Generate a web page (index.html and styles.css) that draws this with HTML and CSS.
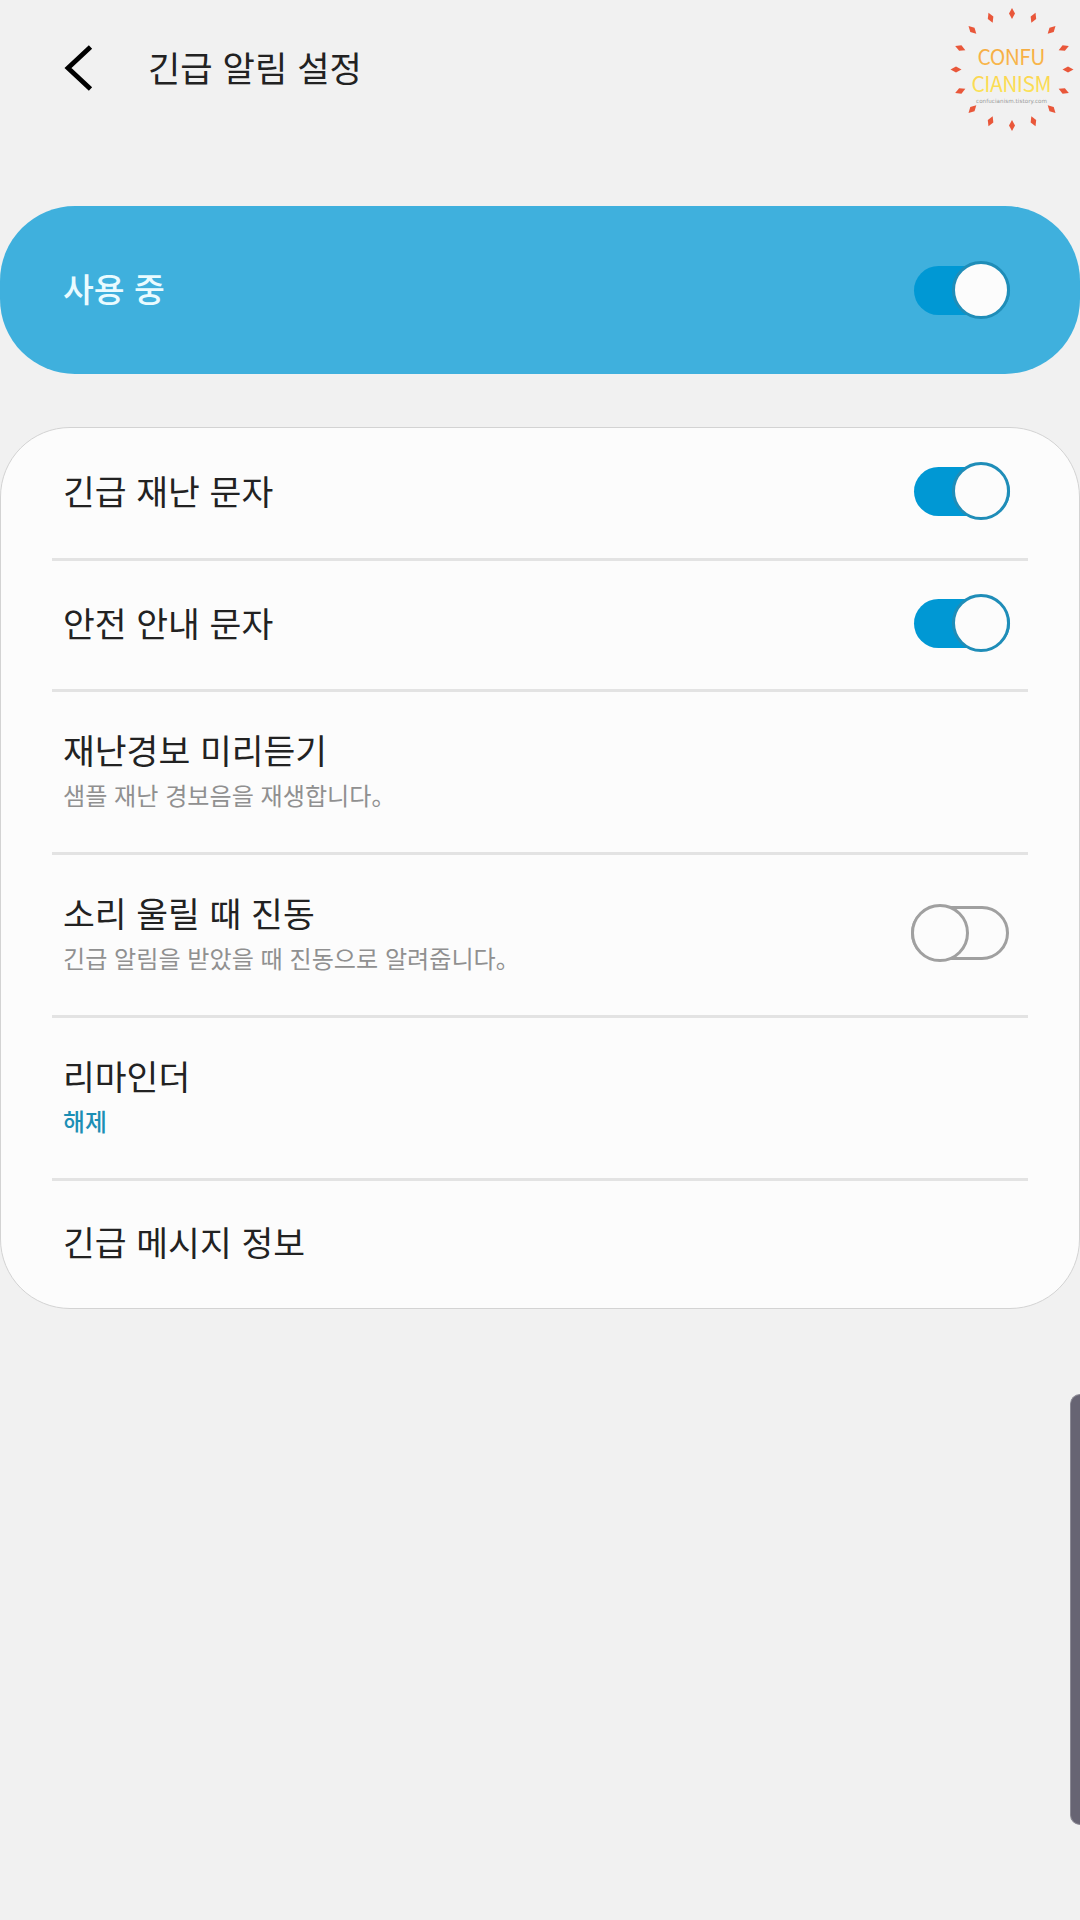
FILE: index.html
```html
<!DOCTYPE html>
<html lang="ko">
  <head>
    <meta charset="UTF-8" />
    <title>긴급 알림 설정</title>
    <link rel="stylesheet" href="styles.css">
  </head>
  <body>
    <header class="title-bar">
      <svg class="back" width="30" height="50" viewBox="0 0 30 50">
        <path d="M27.5 4 L5 25 L27.5 46" />
      </svg>
      <h1 class="title-text">긴급 알림 설정</h1>
      <svg class="logo" width="140" height="140" viewBox="0 0 140 140">
        <defs>
          <path id="ray" d="M0 -61.5 L3 -56 L0 -50.5 L-3 -56 Z" />
          <linearGradient id="gold" x1="0" y1="0" x2="0" y2="1">
            <stop offset="0" stop-color="#f5a83c" />
            <stop offset="1" stop-color="#f9b950" />
          </linearGradient>
          <linearGradient id="yellow" x1="0" y1="0" x2="0" y2="1">
            <stop offset="0" stop-color="#fbd04c" />
            <stop offset="1" stop-color="#fbe65a" />
          </linearGradient>
        </defs>
        <g class="rays" transform="translate(72 69.5)">
          <use href="#ray" />
          <use href="#ray" transform="rotate(22.5)" />
          <use href="#ray" transform="rotate(45)" />
          <use href="#ray" transform="rotate(67.5)" />
          <use href="#ray" transform="rotate(90)" />
          <use href="#ray" transform="rotate(112.5)" />
          <use href="#ray" transform="rotate(135)" />
          <use href="#ray" transform="rotate(157.5)" />
          <use href="#ray" transform="rotate(180)" />
          <use href="#ray" transform="rotate(202.5)" />
          <use href="#ray" transform="rotate(225)" />
          <use href="#ray" transform="rotate(247.5)" />
          <use href="#ray" transform="rotate(270)" />
          <use href="#ray" transform="rotate(292.5)" />
          <use href="#ray" transform="rotate(315)" />
          <use href="#ray" transform="rotate(337.5)" />
        </g>
        <text class="logo-name" x="37.5" y="64.5" textLength="68" fill="url(#gold)">CONFU</text>
        <text class="logo-name" x="31.5" y="92" textLength="80" fill="url(#yellow)">CIANISM</text>
        <text class="logo-url" x="36" y="102.5" textLength="71">confucianism.tistory.com</text>
      </svg>
    </header>

    <section class="master">
      <span class="label">사용 중</span>
      <span class="switch on"></span>
    </section>

    <main class="list">
      <div class="row">
        <span class="label">긴급 재난 문자</span>
        <span class="switch on"></span>
      </div>
      <div class="row">
        <span class="label">안전 안내 문자</span>
        <span class="switch on"></span>
      </div>
      <div class="row tall">
        <div class="texts">
          <span class="label">재난경보 미리듣기</span>
          <span class="desc">샘플 재난 경보음을 재생합니다。</span>
        </div>
      </div>
      <div class="row tall">
        <div class="texts">
          <span class="label">소리 울릴 때 진동</span>
          <span class="desc">긴급 알림을 받았을 때 진동으로 알려줍니다。</span>
        </div>
        <span class="switch off"></span>
      </div>
      <div class="row tall">
        <div class="texts">
          <span class="label">리마인더</span>
          <span class="desc value">해제</span>
        </div>
      </div>
      <div class="row last">
        <span class="label">긴급 메시지 정보</span>
      </div>
    </main>

    <div class="edge-handle"></div>
  </body>
</html>
```

FILE: styles.css
```css
* {
  box-sizing: border-box;
}

body {
  margin: 0;
  min-height: 1920px;
  background: #f1f1f1;
  color: #222;
  font-family: "Noto Sans CJK KR", sans-serif;
  overflow: hidden;
}

/* header */
.title-bar {
  display: flex;
  align-items: flex-start;
  height: 206px;
  padding-left: 63px;
}

.back {
  margin-top: 43px;
  fill: none;
  stroke: #000;
  stroke-width: 4.8;
}

.title-text {
  margin: 42px 0 0 55px;
  font-size: 35.2px;
  font-weight: 400;
  line-height: 50px;
}

.logo {
  margin-left: auto;
}

.rays {
  fill: #e9573a;
}

.logo-name {
  font-size: 21px;
}

.logo-url {
  font-family: "DejaVu Sans", sans-serif;
  font-size: 5.6px;
  fill: #999;
}

/* blue on/off bar */
.master {
  display: flex;
  align-items: center;
  justify-content: space-between;
  height: 168px;
  padding: 0 70px 0 63px;
  border-radius: 75px;
  background: #3fb0dd;
  color: #e9fbff;
}

.master .label {
  padding-bottom: 4px;
  font-size: 33.5px;
  font-weight: 500;
}

/* settings list */
.list {
  height: 882px;
  margin-top: 53px;
  padding: 0 51px;
  border: 1px solid #d3d3d3;
  border-radius: 70px;
  background: #fcfcfc;
}

.row {
  display: flex;
  align-items: center;
  justify-content: space-between;
  height: 131px;
  padding: 0 18px 4px 11px;
  border-bottom: 3px solid #e3e3e3;
}

.row > .label {
  padding-bottom: 3px;
}

.row:first-child {
  height: 133px;
}

.row.tall {
  height: 163px;
}

.row.last {
  height: 126px;
  border-bottom: none;
}

.texts {
  display: flex;
  flex-direction: column;
  gap: 6px;
}

.label {
  font-size: 34.6px;
  line-height: 44px;
}

.desc {
  color: #909090;
  font-size: 24.1px;
  line-height: 36px;
}

.desc.value {
  color: #1c8fb5;
  font-size: 23.8px;
  font-weight: 500;
}

/* switches */
.switch {
  position: relative;
  width: 96px;
  height: 49px;
  border-radius: 27px;
}

.switch::after {
  content: "";
  position: absolute;
  box-sizing: border-box;
  width: 58px;
  height: 58px;
  border-radius: 50%;
  background: #fcfcfc;
}

.switch.on {
  background: #0098d4;
}

.switch.on::after {
  top: -4.5px;
  right: 0;
  border: 3px solid #1f8db8;
}

.switch.off {
  width: 98px;
  height: 54px;
  margin-right: 1px;
  border: 3px solid #a0a0a0;
}

.switch.off::after {
  top: -5px;
  left: -3px;
  border: 3px solid #a0a0a0;
}

/* side panel handle over the right edge */
.edge-handle {
  position: absolute;
  top: 1394px;
  right: 0;
  width: 10px;
  height: 431px;
  border: 1px solid #8b8994;
  border-right: none;
  border-radius: 12px 0 0 12px;
  background: #676473;
}
```
